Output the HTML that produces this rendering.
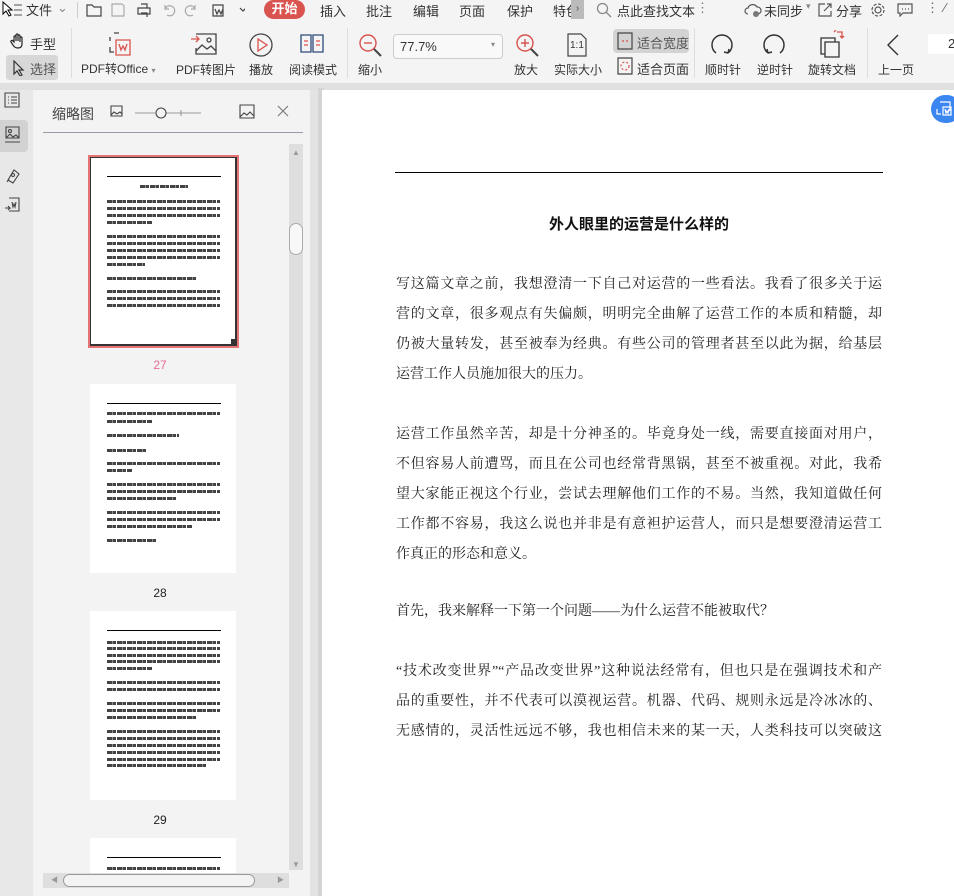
<!DOCTYPE html>
<html><head><meta charset="utf-8"><style>
*{margin:0;padding:0;box-sizing:border-box}
body{width:954px;height:896px;overflow:hidden;background:#e6e6e6;font-family:"Liberation Sans","Noto Sans CJK SC",sans-serif;position:relative;color:#333}
.a{position:absolute}
.t{font-size:13px;color:#333;white-space:nowrap}
.lbl{font-size:12px;color:#333;white-space:nowrap;text-align:center}
.bar{position:absolute;height:3px;background:repeating-linear-gradient(90deg,#222 0 5px,#777 5px 6px,#222 6px 9px,#fff 9px 10px);opacity:.85}
.doc{font-family:"Liberation Serif","Noto Serif CJK SC",serif;font-size:14px;color:#222;position:absolute;left:396px;width:486px;text-align-last:justify;white-space:nowrap;line-height:20px}
svg{position:absolute}
</style></head><body>
<!-- toolbar -->
<div class="a" style="left:0;top:0;width:954px;height:83px;background:#f4f4f4"></div>
<div class="a" style="left:0;top:83px;width:954px;height:7px;background:#e0e0e0"></div>
<!-- row 1 -->
<svg style="left:2px;top:1px" width="22" height="16" viewBox="0 0 22 16"><path d="M1 1 L1 13 L4 10 L7 15 L9 14 L6 9 L10 9Z" fill="#fff" stroke="#000"/><path d="M12 4h8M12 9h8M12 14h8" stroke="#555"/></svg>
<div class="a t" style="left:26px;top:0px">文件</div>
<div class="a t" style="left:57px;top:0px;color:#888">⌄</div>
<div class="a" style="left:77px;top:2px;width:1px;height:16px;background:#ccc"></div>
<svg style="left:85px;top:2px" width="160" height="16" viewBox="0 0 160 16" fill="none" stroke="#444" stroke-width="1.2"><path d="M2 3h5l2 2h7v9H2z"/><path d="M27 2h10l2 2v10H27z" stroke="#aaa"/><path d="M53 6h12v6H53zM56 2h6v4M56 11h6v4"/><path d="M80 7a5 5 0 1 1 2 6M80 3v4h4" stroke="#aaa"/><path d="M110 7a5 5 0 1 0-2 6M110 3v4h-4" stroke="#aaa"/><path d="M128 3h10v11h-10zM130 7l2 5 2-4 2 4 2-5"/><path d="M155 6l3 3 3-3"/></svg>
<div class="a" style="left:264px;top:0;width:41px;height:19px;border-radius:10px;background:#d9534f;color:#fff;font-size:13px;text-align:center;line-height:18px;font-weight:bold">开始</div>
<div class="a t" style="left:320px;top:1px">插入</div>
<div class="a t" style="left:366px;top:1px">批注</div>
<div class="a t" style="left:413px;top:1px">编辑</div>
<div class="a t" style="left:459px;top:1px">页面</div>
<div class="a t" style="left:507px;top:1px">保护</div>
<div class="a t" style="left:553px;top:1px">特色</div>
<div class="a" style="left:571px;top:0;width:13px;height:19px;background:#bbb;color:#555;font-size:10px;text-align:center;line-height:18px">›</div>
<svg style="left:596px;top:2px" width="16" height="16" fill="none" stroke="#888" stroke-width="1.3"><circle cx="6.5" cy="6.5" r="5"/><path d="M10 10l5 5"/></svg>
<div class="a t" style="left:617px;top:1px">点此查找文本</div>
<div class="a t" style="left:696px;top:0;color:#777">⋮</div>
<svg style="left:744px;top:2px" width="18" height="16" fill="none" stroke="#555" stroke-width="1.2"><path d="M4 12a3 3 0 0 1 0-6a5 5 0 0 1 9-1a3.5 3.5 0 0 1 1 7"/><circle cx="12" cy="12" r="3" fill="#777" stroke="none"/></svg>
<div class="a t" style="left:764px;top:1px">未同步</div>
<div class="a" style="left:806px;top:1px;font-size:9px;color:#888">▾</div>
<svg style="left:817px;top:2px" width="16" height="16" fill="none" stroke="#555" stroke-width="1.2"><path d="M8 2H2v12h12V9M7 9l7-7M10 2h4v4"/></svg>
<div class="a t" style="left:836px;top:1px">分享</div>
<svg style="left:870px;top:2px" width="16" height="16" fill="none" stroke="#555" stroke-width="1.2"><circle cx="8" cy="8" r="3"/><circle cx="8" cy="8" r="6" stroke-dasharray="3 1.7"/></svg>
<svg style="left:897px;top:3px" width="16" height="14" fill="none" stroke="#555" stroke-width="1.2"><path d="M1 1h14v9H6l-3 3v-3H1z"/><path d="M5 6h1M8 6h1M11 6h1"/></svg>
<div class="a t" style="left:926px;top:0;color:#666">⋮</div>
<div class="a t" style="left:944px;top:0;color:#666">⁄</div>
<!-- row 2 -->
<svg style="left:10px;top:33px" width="16" height="16" fill="none" stroke="#222" stroke-width="1.2"><path d="M4 9V4a1 1 0 0 1 2 0v4V2a1 1 0 0 1 2 0v6V3a1 1 0 0 1 2 0v6V5a1 1 0 0 1 2 0v6c0 3-2 4-4 4s-4-1-5-3L1 9a1 1 0 0 1 2-1z"/></svg>
<div class="a t" style="left:30px;top:34px">手型</div>
<div class="a" style="left:6px;top:55px;width:52px;height:25px;background:#d7d7d7;border-radius:3px"></div>
<svg style="left:12px;top:60px" width="14" height="16" fill="none" stroke="#333" stroke-width="1.2"><path d="M2 1v13l3-3 3 5 2-1-3-5h4z"/></svg>
<div class="a t" style="left:30px;top:59px;color:#555">选择</div>
<div class="a" style="left:71px;top:28px;width:1px;height:50px;background:#ddd"></div>
<svg style="left:106px;top:31px" width="30" height="28" fill="none" stroke-width="1.3"><path d="M8 2h5M4 6v4M4 16v5h4" stroke="#444"/><path d="M10 9h14v15H10z" stroke="#d9534f"/><path d="M13 13l2 6 2-4 2 4 2-6" stroke="#d9534f"/></svg>
<div class="a lbl" style="left:81px;top:60px">PDF转Office <span style="font-size:8px;color:#888">▾</span></div>
<svg style="left:191px;top:33px" width="26" height="22" fill="none" stroke="#444" stroke-width="1.3"><path d="M5 1h20v20H5v-6"/><path d="M5 18l6-6 5 4 4-3 5 5"/><circle cx="18" cy="7" r="2"/><path d="M0 6h8M5 3l3 3-3 3" stroke="#d9534f"/></svg>
<div class="a lbl" style="left:176px;top:61px">PDF转图片</div>
<svg style="left:248px;top:32px" width="26" height="26" fill="none" stroke-width="1.3"><circle cx="13" cy="13" r="11" stroke="#444"/><path d="M10 7v12l9-6z" stroke="#d9534f"/></svg>
<div class="a lbl" style="left:249px;top:61px">播放</div>
<svg style="left:300px;top:34px" width="24" height="20" fill="none" stroke-width="1.3"><path d="M1 1h10v17H1zM13 1h10v17H13z" stroke="#2e4a7a"/><path d="M4 7h4M4 11h4M16 7h4M16 11h4" stroke="#d9534f"/></svg>
<div class="a lbl" style="left:289px;top:61px">阅读模式</div>
<div class="a" style="left:347px;top:28px;width:1px;height:50px;background:#ddd"></div>
<svg style="left:358px;top:33px" width="26" height="26" fill="none" stroke-width="1.4"><circle cx="10" cy="10" r="8" stroke="#d9534f"/><path d="M6 10h8" stroke="#d9534f"/><path d="M16 16l7 7" stroke="#444" stroke-width="2"/></svg>
<div class="a lbl" style="left:358px;top:61px">缩小</div>
<div class="a" style="left:393px;top:34px;width:110px;height:25px;border:1px solid #ccc;border-radius:4px;background:#f9f9f9"></div>
<div class="a t" style="left:400px;top:39px">77.7%</div>
<div class="a" style="left:491px;top:40px;font-size:8px;color:#888">▾</div>
<svg style="left:515px;top:33px" width="26" height="26" fill="none" stroke-width="1.4"><circle cx="10" cy="10" r="8" stroke="#d9534f"/><path d="M6 10h8M10 6v8" stroke="#d9534f"/><path d="M16 16l7 7" stroke="#444" stroke-width="2"/></svg>
<div class="a lbl" style="left:514px;top:61px">放大</div>
<svg style="left:567px;top:33px" width="20" height="24" fill="none" stroke="#444" stroke-width="1.2"><path d="M1 1h13l5 5v17H1z"/></svg>
<div class="a" style="left:570px;top:40px;font-size:10px;color:#333">1:1</div>
<div class="a lbl" style="left:554px;top:61px">实际大小</div>
<div class="a" style="left:613px;top:29px;width:76px;height:24px;background:#d3d3d3;border-radius:4px"></div>
<svg style="left:617px;top:32px" width="16" height="18" fill="none" stroke-width="1.2"><path d="M1 1h14v16H1z" stroke="#444"/><path d="M5 9h6" stroke="#d9534f" stroke-dasharray="2 2"/></svg>
<div class="a t" style="left:637px;top:33px;color:#555">适合宽度</div>
<svg style="left:617px;top:57px" width="16" height="18" fill="none" stroke-width="1.2"><path d="M1 1h14v16H1z" stroke="#444"/><circle cx="8" cy="9" r="4" stroke="#d9534f" stroke-dasharray="2 2"/></svg>
<div class="a t" style="left:637px;top:59px">适合页面</div>
<div class="a" style="left:694px;top:28px;width:1px;height:50px;background:#ddd"></div>
<svg style="left:709px;top:32px" width="26" height="26" fill="none" stroke="#333" stroke-width="1.5"><path d="M19 21A10 10 0 1 0 7 21"/><path d="M19 21l-4-1M19 21l1-4"/></svg>
<div class="a lbl" style="left:705px;top:61px">顺时针</div>
<svg style="left:761px;top:32px" width="26" height="26" fill="none" stroke="#333" stroke-width="1.5"><path d="M7 21A10 10 0 1 1 19 21"/><path d="M7 21l4-1M7 21l-1-4"/></svg>
<div class="a lbl" style="left:757px;top:61px">逆时针</div>
<svg style="left:819px;top:30px" width="26" height="28" fill="none" stroke-width="1.3"><path d="M2 8h14v16H2z" stroke="#333"/><path d="M6 12h14v15H6z" stroke="#333" fill="#f4f4f4"/><path d="M18 2h5v6M21 6l2 2 2-2M15 2l2-2" stroke="#d9534f"/></svg>
<div class="a lbl" style="left:808px;top:61px">旋转文档</div>
<div class="a" style="left:867px;top:28px;width:1px;height:50px;background:#ddd"></div>
<svg style="left:886px;top:34px" width="14" height="22" fill="none" stroke="#333" stroke-width="1.4"><path d="M12 1L2 11l10 10"/></svg>
<div class="a lbl" style="left:878px;top:61px">上一页</div>
<div class="a" style="left:928px;top:34px;width:26px;height:20px;background:#fff"></div>
<div class="a t" style="left:948px;top:36px">2</div>
<!-- left rail -->
<div class="a" style="left:0;top:90px;width:33px;height:806px;background:#e8e8e8"></div>
<div class="a" style="left:0;top:120px;width:28px;height:32px;background:#d2d2d2;border-radius:0 4px 4px 0"></div>
<svg style="left:4px;top:92px" width="18" height="130" fill="none" stroke="#444" stroke-width="1.1"><path d="M1 1h14v14H1zM4 5h1M7 5h6M4 8h1M7 8h6M4 11h1M7 11h6"/><path d="M2 35h13v11H2zM2 46l4-4 3 3 3-2 3 3M1 50h15"/><circle cx="6" cy="39" r="1.5"/><path d="M4 88l6-10 5 4-6 9zM3 90l2-3"/><circle cx="9" cy="83" r="1.5"/><path d="M5 106h10v13H5M1 116h5l-2-2M4 118l2-2M8 110l1 5 1-3 1 3 1-5"/></svg>
<!-- thumbnail panel -->
<div class="a" style="left:33px;top:90px;width:277px;height:806px;background:#f3f3f3"></div>
<div class="a" style="left:310px;top:90px;width:12px;height:806px;background:#e3e3e3"></div>
<div class="a t" style="left:52px;top:104px;font-size:14px;color:#444">缩略图</div>
<svg style="left:110px;top:104px" width="180" height="18" fill="none" stroke="#444" stroke-width="1.1"><path d="M1 2h11v10H1zM1 11l3-3 3 2 3-2 2 2"/><path d="M25 9h20M55 9h36M71 6v6" stroke="#999"/><circle cx="51" cy="9" r="5" fill="#f3f3f3"/><path d="M130 1h14v13H130zM130 13l4-4 3 2 3-3 4 4"/><path d="M168 2l10 10M178 2L168 12" stroke="#777"/></svg>
<div class="a" style="left:43px;top:132px;width:260px;height:1px;background:#9a9aa8"></div>
<!-- v scrollbar -->
<div class="a" style="left:289px;top:144px;width:14px;height:726px;background:#dedede"></div>
<div class="a" style="left:292px;top:148px;font-size:8px;color:#999">▲</div>
<div class="a" style="left:292px;top:860px;font-size:8px;color:#999">▼</div>
<div class="a" style="left:289px;top:223px;width:14px;height:32px;background:#f8f8f8;border:1px solid #aaa;border-radius:7px"></div>
<!-- h scrollbar -->
<div class="a" style="left:43px;top:873px;width:246px;height:15px;background:#dedede"></div>
<div class="a" style="left:63px;top:874px;width:192px;height:13px;background:#f3f3f3;border:1px solid #999;border-radius:7px"></div>
<div class="a" style="left:51px;top:875px;font-size:7px;color:#999">◀</div>
<div class="a" style="left:277px;top:875px;font-size:7px;color:#999">▶</div>
<!-- thumb 27 -->
<div class="a" style="left:88px;top:155px;width:151px;height:193px;border:2px solid #e57373;background:#fff"></div>
<div class="a" style="left:90px;top:157px;width:147px;height:189px;border:1px solid #333;border-right-width:2px;border-bottom-width:2px"></div>
<div class="a" style="left:231px;top:339px;width:5px;height:5px;background:#333"></div>
<div class="a" style="left:107px;top:176px;width:114px;height:1px;background:#000"></div>
<div class="bar" style="left:140px;top:185px;width:48px"></div>
<div class="bar" style="left:107px;top:200px;width:113px"></div><div class="bar" style="left:107px;top:207px;width:113px"></div><div class="bar" style="left:107px;top:214px;width:113px"></div><div class="bar" style="left:107px;top:221px;width:45px"></div>
<div class="bar" style="left:107px;top:235px;width:113px"></div><div class="bar" style="left:107px;top:242px;width:113px"></div><div class="bar" style="left:107px;top:249px;width:113px"></div><div class="bar" style="left:107px;top:256px;width:113px"></div><div class="bar" style="left:107px;top:263px;width:38px"></div>
<div class="bar" style="left:107px;top:277px;width:90px"></div>
<div class="bar" style="left:107px;top:290px;width:113px"></div><div class="bar" style="left:107px;top:297px;width:113px"></div><div class="bar" style="left:107px;top:304px;width:113px"></div>
<div class="a" style="left:90px;top:358px;width:140px;text-align:center;font-size:12px;color:#e86a9a">27</div>
<!-- thumb 28 -->
<div class="a" style="left:90px;top:384px;width:146px;height:189px;background:#fff"></div>
<div class="a" style="left:107px;top:403px;width:114px;height:1px;background:#000"></div>
<div class="bar" style="left:107px;top:412px;width:113px"></div><div class="bar" style="left:107px;top:420px;width:45px"></div>
<div class="bar" style="left:107px;top:434px;width:72px"></div>
<div class="bar" style="left:107px;top:449px;width:40px"></div>
<div class="bar" style="left:107px;top:462px;width:113px"></div><div class="bar" style="left:107px;top:469px;width:25px"></div>
<div class="bar" style="left:107px;top:483px;width:113px"></div><div class="bar" style="left:107px;top:490px;width:113px"></div><div class="bar" style="left:107px;top:497px;width:70px"></div>
<div class="bar" style="left:107px;top:511px;width:113px"></div><div class="bar" style="left:107px;top:518px;width:113px"></div><div class="bar" style="left:107px;top:525px;width:85px"></div>
<div class="bar" style="left:107px;top:539px;width:50px"></div>
<div class="a" style="left:90px;top:586px;width:140px;text-align:center;font-size:12px;color:#222">28</div>
<!-- thumb 29 -->
<div class="a" style="left:90px;top:611px;width:146px;height:189px;background:#fff"></div>
<div class="a" style="left:107px;top:630px;width:114px;height:1px;background:#000"></div>
<div class="bar" style="left:107px;top:641px;width:113px"></div><div class="bar" style="left:107px;top:647px;width:113px"></div><div class="bar" style="left:107px;top:654px;width:113px"></div><div class="bar" style="left:107px;top:660px;width:113px"></div><div class="bar" style="left:107px;top:667px;width:45px"></div>
<div class="bar" style="left:107px;top:681px;width:113px"></div><div class="bar" style="left:107px;top:688px;width:113px"></div>
<div class="bar" style="left:107px;top:702px;width:113px"></div><div class="bar" style="left:107px;top:709px;width:113px"></div><div class="bar" style="left:107px;top:716px;width:90px"></div>
<div class="bar" style="left:107px;top:730px;width:113px"></div><div class="bar" style="left:107px;top:737px;width:113px"></div><div class="bar" style="left:107px;top:744px;width:113px"></div><div class="bar" style="left:107px;top:751px;width:113px"></div><div class="bar" style="left:107px;top:758px;width:113px"></div><div class="bar" style="left:107px;top:764px;width:100px"></div>
<div class="a" style="left:90px;top:813px;width:140px;text-align:center;font-size:12px;color:#222">29</div>
<!-- thumb 30 -->
<div class="a" style="left:90px;top:838px;width:146px;height:35px;background:#fff"></div>
<div class="a" style="left:107px;top:857px;width:114px;height:1px;background:#000"></div>
<div class="bar" style="left:107px;top:867px;width:113px"></div>
<!-- document page -->
<div class="a" style="left:318px;top:88px;width:6px;height:808px;background:#d4d4d4"></div>
<div class="a" style="left:322px;top:90px;width:632px;height:806px;background:#fff"></div>
<div class="a" style="left:395px;top:172px;width:488px;height:1px;background:#000"></div>
<div class="a" style="left:396px;top:213px;width:486px;text-align:center;font-size:15px;font-weight:bold;color:#111">外人眼里的运营是什么样的</div>
<div class="doc" style="top:275px">写这篇文章之前，我想澄清一下自己对运营的一些看法。我看了很多关于运</div>
<div class="doc" style="top:305px">营的文章，很多观点有失偏颇，明明完全曲解了运营工作的本质和精髓，却</div>
<div class="doc" style="top:335px">仍被大量转发，甚至被奉为经典。有些公司的管理者甚至以此为据，给基层</div>
<div class="doc" style="top:365px;text-align-last:left">运营工作人员施加很大的压力。</div>
<div class="doc" style="top:425px">运营工作虽然辛苦，却是十分神圣的。毕竟身处一线，需要直接面对用户，</div>
<div class="doc" style="top:455px">不但容易人前遭骂，而且在公司也经常背黑锅，甚至不被重视。对此，我希</div>
<div class="doc" style="top:485px">望大家能正视这个行业，尝试去理解他们工作的不易。当然，我知道做任何</div>
<div class="doc" style="top:515px">工作都不容易，我这么说也并非是有意袒护运营人，而只是想要澄清运营工</div>
<div class="doc" style="top:545px;text-align-last:left">作真正的形态和意义。</div>
<div class="doc" style="top:602px;text-align-last:left">首先，我来解释一下第一个问题——为什么运营不能被取代？</div>
<div class="doc" style="top:662px">“技术改变世界”“产品改变世界”这种说法经常有，但也只是在强调技术和产</div>
<div class="doc" style="top:692px">品的重要性，并不代表可以漠视运营。机器、代码、规则永远是冷冰冰的、</div>
<div class="doc" style="top:722px">无感情的，灵活性远远不够，我也相信未来的某一天，人类科技可以突破这</div>
<!-- blue floating button -->
<div class="a" style="left:931px;top:95px;width:30px;height:28px;border-radius:14px;background:#3b86f0"></div>
<svg style="left:936px;top:101px" width="16" height="16" fill="none" stroke="#fff" stroke-width="1.2"><path d="M4 1h10v9M7 6h8v8H7zM9 8l1 4 1-2 1 2 1-4M1 8v5h4"/></svg>
</body></html>
